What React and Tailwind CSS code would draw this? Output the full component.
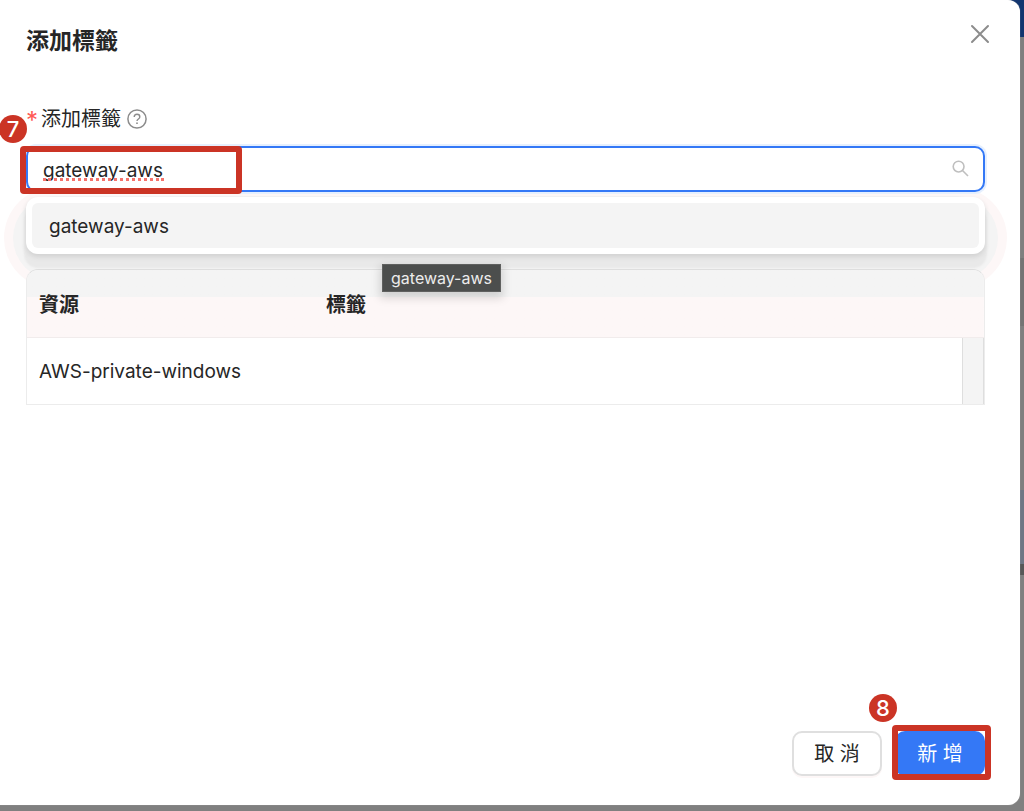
import { useState } from "react"

const ROWS = [{ resource: "AWS-private-windows", tag: "" }]

export default function App() {
  const [value, setValue] = useState("gateway-aws")

  return (
    <div className="relative flex min-h-screen flex-col bg-[#808080] pr-1 pb-1.5 font-['Inter','Noto_Sans_CJK_TC',sans-serif] text-xl text-[#262626]">
      <Backdrop />

      <main
        role="dialog"
        aria-labelledby="dialog-title"
        className="relative flex flex-1 flex-col rounded-r-xl bg-white pt-[27px] pr-[35px] pb-[29px] pl-[26px] shadow-[0_0_1px_#b5b5b5]"
      >
        <header className="flex items-center justify-between">
          <h1 id="dialog-title" className="text-[23px] leading-7 font-bold">
            添加標籤
          </h1>
          <button type="button" aria-label="Close" className="-mt-3.5 -mr-[5px] text-[#8c8c8c]">
            <svg width="20" height="20" viewBox="0 0 20 20" fill="none" stroke="currentColor" strokeWidth="2" strokeLinecap="round">
              <path d="M2 2l16 16M18 2L2 18" />
            </svg>
          </button>
        </header>

        {/* ── Tag field ── */}
        <div className="relative mt-[50px] flex items-center leading-7">
          <span className="w-[15px] pt-1 text-2xl leading-6 text-[#ff5a55]" aria-hidden="true">*</span>
          <label htmlFor="tag">添加標籤</label>
          <HelpIcon />
          <StepBadge className="absolute top-2.5 right-full -mr-px">7</StepBadge>
        </div>

        <div className="relative mt-[13px]">
          <input
            id="tag"
            type="text"
            value={value}
            spellCheck={false}
            onChange={(e) => setValue(e.target.value)}
            className="relative z-10 block h-[46px] w-full rounded-[10px] border-2 border-[#3478f6] bg-white pt-0.5 pr-14 pl-[15px] text-[19px] leading-9 shadow-[0_0_0_2px_#e6f0fe] outline-none"
          />
          {/* spelling mark under the typed word */}
          <div className="pointer-events-none absolute top-8 left-[17px] z-10 w-[121px] border-b-3 border-dotted border-[#f5736b]" />
          <svg
            className="absolute top-3.5 right-4 z-10 text-[#bfbfbf]"
            width="17"
            height="17"
            viewBox="0 0 17 17"
            fill="none"
            stroke="currentColor"
            strokeWidth="1.6"
            aria-hidden="true"
          >
            <circle cx="6.6" cy="6.6" r="5.4" />
            <path d="M10.5 10.5l5.5 5.5" />
          </svg>

          {/* soft halo behind the suggestion list */}
          <div className="absolute -inset-x-[13px] top-full mt-1 h-[84px] rounded-full bg-[#f4f4f4] shadow-[0_0_0_9px_#fdf7f7]" />
          <ul
            role="listbox"
            className="absolute inset-x-0 top-full mt-[5px] rounded-xl bg-white p-1.5 shadow-[0_3px_5px_0_#d2d2d2,0_12px_2px_2px_#e9e9e9]"
          >
            <li role="option" aria-selected="true" className="rounded-md bg-[#f4f4f4] px-[17px] pt-2.5 pb-[7px] text-[19px] leading-7">
              gateway-aws
            </li>
          </ul>
          <div
            role="tooltip"
            className="absolute top-[118px] left-[356px] z-20 border border-[#5f605f] bg-[#4c4e4d] px-2 text-base leading-[26px] text-[#ececec] shadow-[0_4px_10px_2px_#00000026]"
          >
            gateway-aws
          </div>
          <Highlight className="top-0 -bottom-0.5 -left-1.5 w-[222px]" />
        </div>

        {/* ── Selected resources ── */}
        <table className="relative z-10 mt-[77px] w-full table-fixed border-separate border-spacing-0 overflow-hidden rounded-t-xl border border-[#ececec] border-t-[#dedede] text-left">
          <colgroup>
            <col className="w-[30%]" />
            <col />
            <col className="w-[22px]" />
          </colgroup>
          <thead className="bg-linear-to-b from-[#f4f4f4] from-[27px] to-[#fdf7f7] to-[27px]">
            <tr>
              <th className="h-[68px] border-b border-[#f1ecec] px-3 pt-0.5 font-bold">資源</th>
              <th colSpan={2} className="border-b border-[#f1ecec] px-3 pt-0.5 font-bold">
                標籤
              </th>
            </tr>
          </thead>
          <tbody className="bg-white">
            {ROWS.map((row) => (
              <tr key={row.resource}>
                <td className="h-[66px] px-3 pt-0.5 text-[19px] whitespace-nowrap">{row.resource}</td>
                <td className="px-3">{row.tag}</td>
                <td className="border-x border-[#dedede] bg-[#f4f4f4]" />
              </tr>
            ))}
          </tbody>
        </table>

        <footer className="mt-auto flex justify-end gap-[13px] pt-8">
          <button
            type="button"
            className="h-[45px] w-[90px] rounded-[10px] border-2 border-[#dfdfdf] bg-white shadow-[0_2px_0_#fdf7f7]"
          >
            取 消
          </button>
          <div className="relative">
            <button type="button" className="block h-[45px] w-[90px] rounded-[10px] bg-[#3478f6] text-white">
              新 增
            </button>
            <Highlight className="-top-1.5 -right-1.5 -bottom-1 -left-[3px]" />
            <StepBadge className="absolute right-full bottom-full -mr-0.5 mb-[9px]">8</StepBadge>
          </div>
        </footer>
      </main>
    </div>
  )
}

// The dimmed page that shows past the dialog's right edge
function Backdrop() {
  return (
    <div className="absolute inset-y-0 right-0 flex w-4 flex-col" aria-hidden="true">
      <div className="h-[37px] bg-[#12356f]" />
      <div className="h-[221px] bg-[#7f7f7f]" />
      <div className="h-[68px] bg-[#747474]" />
      <div className="h-[164px] bg-[#7f7f7f]" />
      <div className="h-[74px] bg-[#6f7785]" />
      <div className="h-[11px] bg-[#585858]" />
    </div>
  )
}

function HelpIcon() {
  return (
    <svg className="ml-1.5 text-[#8c8c8c]" width="20" height="20" viewBox="0 0 20 20" fill="none" stroke="currentColor" aria-hidden="true">
      <circle cx="10" cy="10" r="9.1" strokeWidth="1.5" />
      <path d="M7.2 8.1c0-1.7 1.2-2.8 2.8-2.8s2.8 1.1 2.8 2.6c0 2-2.8 2.1-2.8 4.2" strokeWidth="1.4" />
      <circle cx="10" cy="14.2" r="0.9" fill="currentColor" stroke="none" />
    </svg>
  )
}

function StepBadge({ children, className }) {
  return (
    <span className={`flex h-7 w-7 items-center justify-center rounded-full bg-[#cb3425] text-[22px] font-medium text-white ${className}`}>
      {children}
    </span>
  )
}

function Highlight({ className }) {
  return <div className={`pointer-events-none absolute z-10 rounded-sm border-6 border-[#cb3425] ${className}`} />
}
